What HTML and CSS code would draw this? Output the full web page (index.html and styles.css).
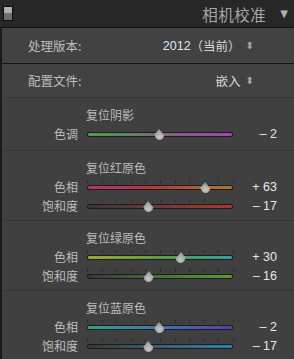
FILE: index.html
```html
<!DOCTYPE html>
<html lang="zh-CN">
<head>
  <meta charset="UTF-8">
  <title>相机校准</title>
  <link rel="stylesheet" href="styles.css">
</head>
<body>

  <div class="header">
    <span class="toggle"></span>
    <span class="title">相机校准</span>
    <span class="collapse">▼</span>
  </div>

  <div class="panel">
    <div class="row first">
      <span class="row-label">处理版本:</span>
      <span class="row-value"><span class="ver">2012</span>（当前）<span class="updown">⬍</span></span>
    </div>
    <div class="row">
      <span class="row-label">配置文件:</span>
      <span class="row-value">嵌入<span class="updown">⬍</span></span>
    </div>

    <div class="group shadow">
      <div class="group-title">复位阴影</div>
      <div class="slider-row">
        <span class="label">色调</span>
        <div class="track-wrap">
          <div class="track tone"></div>
          <span class="thumb" style="left: 49%"></span>
        </div>
        <span class="value">– 2</span>
      </div>
    </div>

    <div class="group">
      <div class="group-title">复位红原色</div>
      <div class="slider-row">
        <span class="label">色相</span>
        <div class="track-wrap ticks">
          <div class="track red-hue"></div>
          <span class="thumb" style="left: 80.5%"></span>
        </div>
        <span class="value">+ 63</span>
      </div>
      <div class="slider-row">
        <span class="label">饱和度</span>
        <div class="track-wrap ticks">
          <div class="track red-sat"></div>
          <span class="thumb" style="left: 41.5%"></span>
        </div>
        <span class="value">– 17</span>
      </div>
    </div>

    <div class="group">
      <div class="group-title">复位绿原色</div>
      <div class="slider-row">
        <span class="label">色相</span>
        <div class="track-wrap ticks">
          <div class="track green-hue"></div>
          <span class="thumb" style="left: 64%"></span>
        </div>
        <span class="value">+ 30</span>
      </div>
      <div class="slider-row">
        <span class="label">饱和度</span>
        <div class="track-wrap ticks">
          <div class="track green-sat"></div>
          <span class="thumb" style="left: 42%"></span>
        </div>
        <span class="value">– 16</span>
      </div>
    </div>

    <div class="group">
      <div class="group-title">复位蓝原色</div>
      <div class="slider-row">
        <span class="label">色相</span>
        <div class="track-wrap ticks">
          <div class="track blue-hue"></div>
          <span class="thumb" style="left: 49%"></span>
        </div>
        <span class="value">– 2</span>
      </div>
      <div class="slider-row">
        <span class="label">饱和度</span>
        <div class="track-wrap ticks">
          <div class="track blue-sat"></div>
          <span class="thumb" style="left: 41.5%"></span>
        </div>
        <span class="value">– 17</span>
      </div>
    </div>
  </div>

</body>
</html>
```

FILE: styles.css
```css
body {
  margin: 0;
  background: #3f3f3f;
  font-family: "Noto Sans CJK SC", "Liberation Sans", sans-serif;
  font-size: 12px;
  color: #c4c4c4;
  width: 294px;
  height: 359px;
  overflow: hidden;
}

.header {
  height: 27px;
  background: #272727;
  display: flex;
  align-items: center;
  padding: 0 6px 0 3px;
}

.toggle {
  width: 8px;
  height: 13px;
  border: 1px solid #0c0c0c;
  background: linear-gradient(#b2b2b2 0 50%, #6e6e6e 50% 100%);
  margin-top: -1px;
}

.title {
  margin-left: auto;
  font-size: 15.5px;
  letter-spacing: 0.5px;
  color: #a6a6a6;
}

.collapse {
  margin-left: 14px;
  font-size: 10px;
  color: #b0b0b0;
  font-family: "DejaVu Sans", sans-serif;
}

.panel {
  border-left: 2px solid #1b1b1b;
  border-top: 1px solid #111;
  background: #404040;
}

.row {
  display: flex;
  align-items: center;
  justify-content: space-between;
  height: 33px;
  padding: 0 40px 0 26px;
  border-bottom: 1px solid #383838;
  background: #424242;
}

.row.first {
  height: 35px;
  border-bottom-color: #141414;
}

.row-label {
  font-size: 12.5px;
  color: #bdbdbd;
}

.row-value {
  font-size: 12.5px;
  color: #d8d8d8;
  display: flex;
  align-items: center;
}

.ver {
  font-family: "Liberation Sans", sans-serif;
  color: #dfe6f2;
}

.updown {
  margin-left: 5px;
  font-size: 10px;
  color: #a8a8a8;
  font-family: "DejaVu Sans", sans-serif;
}

.group {
  padding: 8px 0 5px;
  border-bottom: 1px solid #363636;
}

.group.shadow {
  padding-bottom: 7px;
}

.group-title {
  height: 18px;
  line-height: 18px;
  padding-left: 84px;
  color: #bcbcbc;
}

.slider-row {
  display: flex;
  align-items: center;
  height: 19px;
}

.label {
  width: 76px;
  text-align: right;
  color: #bdbdbd;
}

.track-wrap {
  position: relative;
  width: 146px;
  height: 19px;
  margin-left: 9px;
  display: flex;
  align-items: center;
}

.ticks::before {
  content: "";
  position: absolute;
  left: 0;
  top: 3px;
  width: 147px;
  height: 3px;
  background: repeating-linear-gradient(to right, #2c2c2c 0 1px, transparent 1px 14.6px);
}

.track {
  width: 100%;
  height: 3px;
  border: 1px solid #1c1c1c;
  border-radius: 2px;
  margin-top: 2px;
}

.tone { background: linear-gradient(to right, #4a9e46, #786a76 50%, #a640b6); }
.red-hue { background: linear-gradient(to right, #b03478, #b23a3a 45%, #b07630); }
.red-sat { background: linear-gradient(to right, #383535, #6e3a38 50%, #b03434); }
.green-hue { background: linear-gradient(to right, #9aa836, #5e9c42 50%, #34a0a0); }
.green-sat { background: linear-gradient(to right, #363836, #4a7238 50%, #5a9a36); }
.blue-hue { background: linear-gradient(to right, #34a088, #3a78ac 50%, #5840b4); }
.blue-sat { background: linear-gradient(to right, #36383a, #3a6078 50%, #3080aa); }

.thumb {
  position: absolute;
  top: 5px;
  width: 11px;
  height: 11px;
  margin-left: -5px;
  background: radial-gradient(circle at 50% 70%, #c8c8c8, #8e8e8e 80%);
  border-radius: 50% 50% 50% 50% / 30% 30% 70% 70%;
  clip-path: polygon(50% 0, 100% 62%, 100% 100%, 0 100%, 0 62%);
}

.value {
  width: 44px;
  text-align: right;
  font-family: "Liberation Sans", sans-serif;
  font-size: 12.5px;
  color: #e8e8e8;
}
```
